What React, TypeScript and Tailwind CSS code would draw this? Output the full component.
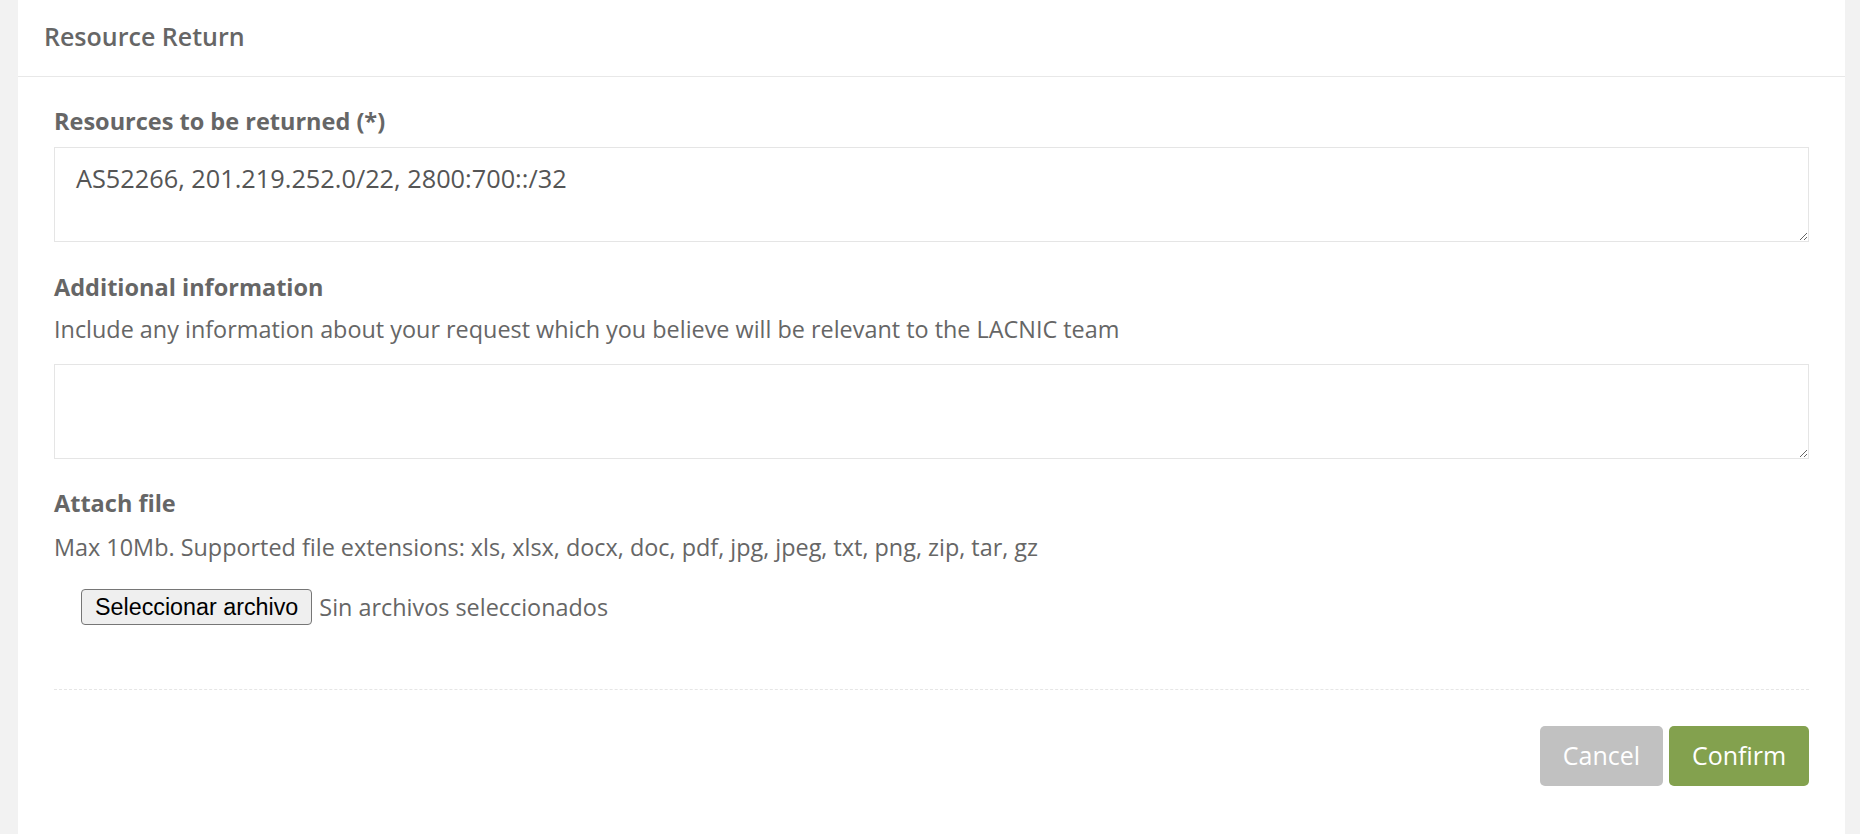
import React from 'react';

const font = { fontFamily: '"Open Sans", "Liberation Sans", sans-serif' };

const App = () => {
  return (
    <div className="min-h-screen bg-[#f2f2f2] pl-[18px] pr-[15px]" style={font}>
      <div className="min-h-screen bg-white">
        {/* Card header */}
        <div className="h-[77px] border-b border-[#e8e8e8] pt-[19px] pl-[26px]">
          <h1 className="text-[25px] leading-[34px] font-semibold text-[#666]">Resource Return</h1>
        </div>

        {/* Form body */}
        <div className="px-[36px] pt-[29px] pb-[48px]">
          <label className="block text-[23.5px] leading-[30px] font-bold text-[#666]">
            Resources to be returned (*)
          </label>
          <textarea
            className="mt-[11px] block h-[95px] w-full resize-y border border-[#e5e5e5] bg-white pl-[21px] pt-[12px] text-[25.3px] leading-[36px] text-[#555] outline-none"
            defaultValue="AS52266, 201.219.252.0/22, 2800:700::/32"
          />

          <label className="mt-[30px] block text-[23.5px] leading-[30px] font-bold text-[#666]">
            Additional information
          </label>
          <p className="mt-[12px] text-[23.4px] leading-[30px] text-[#666]">
            Include any information about your request which you believe will be relevant to the LACNIC team
          </p>
          <textarea className="mt-[20px] block h-[95px] w-full resize-y border border-[#e5e5e5] bg-white pl-[21px] pt-[12px] text-[25.3px] leading-[36px] text-[#555] outline-none" />

          <label className="mt-[29px] block text-[23.5px] leading-[30px] font-bold text-[#666]">Attach file</label>
          <p className="mt-[14px] text-[23.4px] leading-[30px] text-[#666]">
            Max 10Mb. Supported file extensions: xls, xlsx, docx, doc, pdf, jpg, jpeg, txt, png, zip, tar, gz
          </p>

          <div className="mt-[27px] flex items-center gap-[7px] pl-[27px]">
            <button
              className="h-[36px] rounded-[4px] border border-[#767676] bg-[#efefef] px-[13px] text-[23.3px] leading-[26px] text-black"
              style={{ fontFamily: '"Liberation Sans", Arial, sans-serif' }}
            >
              Seleccionar archivo
            </button>
            <span className="text-[23.4px] leading-[30px] text-[#666]">Sin archivos seleccionados</span>
          </div>

          <div className="mt-[64px] border-t border-dashed border-[#e6e6e6]" />

          <div className="mt-[36px] flex justify-end gap-[6px]">
            <button className="h-[60px] w-[123px] rounded-[5px] bg-[#c1c1c1] text-[25px] text-white">Cancel</button>
            <button className="h-[60px] w-[140px] rounded-[5px] bg-[#83a14e] text-[25px] text-white">Confirm</button>
          </div>
        </div>
      </div>
    </div>
  );
};

export default App;
